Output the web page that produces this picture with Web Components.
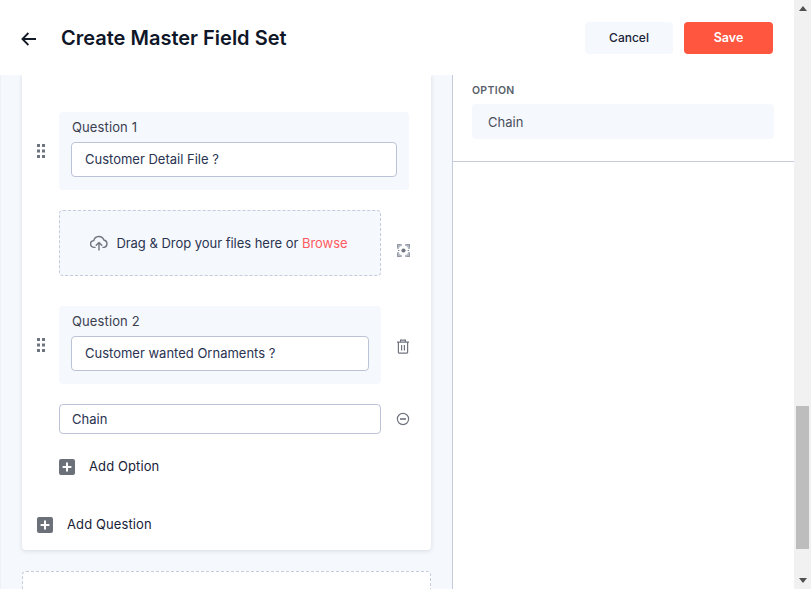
<!DOCTYPE html>
<html><head><meta charset="utf-8">
<style>
html,body{margin:0;padding:0;height:589px;overflow:hidden;background:#fff;font-family:Inter,"Liberation Sans",sans-serif}
</style></head><body>
<app-shell>
  <page-header slot="header">Create Master Field Set</page-header>
  <form-card slot="main">
    <question-row handle>
      <question-box label="Question 1" value="Customer Detail File ?" wide></question-box>
    </question-row>
    <drop-row></drop-row>
    <question-row handle icon="trash">
      <question-box label="Question 2" value="Customer wanted Ornaments ?"></question-box>
    </question-row>
    <option-row value="Chain"></option-row>
    <add-action class="opt">Add Option</add-action>
    <add-action class="q">Add Question</add-action>
  </form-card>
  <dashed-card slot="main"></dashed-card>
  <side-panel slot="side" label="OPTION" value="Chain"></side-panel>
</app-shell>
<script>
function def(name, html, init){
  customElements.define(name, class extends HTMLElement{
    constructor(){super();this.attachShadow({mode:'open'});}
    connectedCallback(){this.shadowRoot.innerHTML=typeof html==='function'?html(this):html;}
  });
}
const A=(e,n)=>e.getAttribute(n)||'';
const DOTS=`<svg width="8" height="14" viewBox="0 0 8 14" fill="#6e7480"><rect x="0" y="0" width="3" height="3"/><rect x="5" y="0" width="3" height="3"/><rect x="0" y="5.5" width="3" height="3"/><rect x="5" y="5.5" width="3" height="3"/><rect x="0" y="11" width="3" height="3"/><rect x="5" y="11" width="3" height="3"/></svg>`;
const TRASH=`<svg width="14" height="15" viewBox="0 0 14 15" fill="none" stroke="#70757f" stroke-width="1.2"><path d="M1 3.2H13M4.6 3V1.2H9.4V3M2.4 3.4V13.2a1 1 0 0 0 1 1H10.6a1 1 0 0 0 1-1V3.4M5.6 6V11.5M8.4 6V11.5"/></svg>`;
const MINUS=`<svg width="14" height="14" viewBox="0 0 14 14" fill="none" stroke="#70757f" stroke-width="1.2"><circle cx="7" cy="7" r="5.6"/><path stroke-width="1.6" d="M4 7H10"/></svg>`;
const FOCUS=`<svg width="13" height="13" viewBox="0 0 13 13"><rect width="13" height="13" fill="#b4b9c4"/><rect x="2" y="2" width="9" height="9" rx="3" fill="#fff"/><path d="M0 5H2V8H0ZM11 5H13V8H11ZM5 0H8V2H5ZM5 11H8V13H5Z" fill="#fff"/><path d="M1 6H2.4V7H1ZM10.6 6H12V7H10.6Z" fill="#7f8490"/><path d="M.5 3.5V.5H3.5M9.5 .5H12.5V3.5M12.5 9.5V12.5H9.5M3.5 12.5H.5V9.5" fill="none" stroke="#8f94a0" stroke-width="1"/><circle cx="6.5" cy="6.5" r="2.1" fill="#70757f"/></svg>`;
const UPLOAD=`<svg width="18" height="16" viewBox="0 0 18 16" fill="none" stroke="#70757f" stroke-width="1.4" stroke-linecap="round" stroke-linejoin="round"><path d="M5 12.4H4.2A3.4 3.4 0 0 1 3.8 5.6 5.2 5.2 0 0 1 13.8 5a3.8 3.8 0 0 1 .4 7.4H13"/><path d="M9 15V7.6M6.2 10.2 9 7.4l2.8 2.8"/></svg>`;

def('app-shell',`<style>
:host{display:flex;height:589px;width:811px;overflow:hidden}
.page{width:794px;display:flex;flex-direction:column;height:589px;flex:none}
.body{display:flex;flex:1;min-height:0}
.main{width:452px;background:#f5f8fc;flex:none;padding:0 21px 0 22px;box-sizing:border-box;overflow:hidden;display:flex;flex-direction:column;gap:21px;box-shadow:inset 1px 0 0 #eef1f6}
.side{flex:1;border-left:1px solid #c5cbdc;min-width:0}
</style>
<div class="page"><slot name="header"></slot>
<div class="body"><div class="main"><slot name="main"></slot></div><div class="side"><slot name="side"></slot></div></div></div>
<fake-scrollbar></fake-scrollbar>`);

def('page-header',`<style>
:host{display:flex;align-items:center;height:75px;flex:none;background:#fff;padding:0 21px 0 21px;box-sizing:border-box;position:relative}
svg{flex:none;margin-right:25px;margin-top:2px}
h1{flex:1;margin:0;font:600 20px Inter,sans-serif;color:#0f1628}
.acts{display:flex;gap:11px}
</style>
<svg width="15" height="14" viewBox="0 0 15 14" fill="none" stroke="#141a26" stroke-width="1.8"><path d="M15 7H1.6M7.4 1 1.4 7l6 6"/></svg>
<h1><slot></slot></h1>
<div class="acts"><ui-button>Cancel</ui-button><ui-button primary>Save</ui-button></div>`);

def('ui-button',e=>`<style>
:host{display:flex;align-items:center;justify-content:center;width:${e.hasAttribute('primary')?89:88}px;height:32px;border-radius:4px;
background:${e.hasAttribute('primary')?'#ff5640':'#f5f8fc'};color:${e.hasAttribute('primary')?'#fff':'#1a2238'};
font:${e.hasAttribute('primary')?600:500} ${e.hasAttribute('primary')?12.5:12}px Inter,sans-serif}
</style><slot></slot>`);

def('form-card',`<style>
:host{display:flex;flex-direction:column;flex:none;width:409px;height:475px;box-sizing:border-box;background:#fff;padding:37px 0 0 15px;border-radius:0 0 4px 4px;box-shadow:0 1px 4px rgba(60,70,100,.16)}
</style><slot></slot>`);

def('dashed-card',`<style>
:host{display:block;flex:none;width:409px;height:60px;box-sizing:border-box;background:#fff;border:1px dashed #c5cbdc;border-radius:4px}
</style>`);

def('question-row',e=>`<style>
:host{display:flex;align-items:center;flex:none}
.h{width:8px;flex:none;margin-right:14px;display:flex}
.i{margin-left:15px;display:flex;flex:none;margin-top:2px}
</style><div class="h">${DOTS}</div><slot></slot>${A(e,'icon')==='trash'?`<div class="i">${TRASH}</div>`:''}`);

def('question-box',e=>`<style>
:host{display:flex;flex:none;flex-direction:column;box-sizing:border-box;width:${e.hasAttribute('wide')?350:322}px;height:78px;background:#f5f8fc;border-radius:4px;padding:0 12px}
.l{height:30px;font:400 13px/31px Inter,sans-serif;letter-spacing:.12px;padding-left:1px;color:#3b4050}
</style><div class="l">${A(e,'label')}</div><text-field value="${A(e,'value')}"></text-field>`);

def('text-field',e=>`<style>
:host{display:flex;align-items:center;box-sizing:border-box;height:35px;background:#fff;border:1px solid #bcc3d6;border-radius:4px;padding:0 13px 1px;font:400 13px Inter,sans-serif;color:#2a3350}
</style>${A(e,'value')}`);

def('drop-row',`<style>
:host{display:flex;flex:none;margin:20px 0 30px 22px;height:66px}
.z{flex:none;box-sizing:border-box;width:322px;height:66px;background:#f5f8fc;border:1px dashed #c5cbdc;border-radius:4px;display:flex;align-items:center;justify-content:center;gap:8px;font:400 13px Inter,sans-serif;letter-spacing:-.03px;color:#2a3350;padding-right:2px}
.z svg{margin-top:-1px}
b{font-weight:400;color:#ff5a5f}
.i{margin:34px 0 0 16px;height:13px;display:flex;flex:none}
</style><div class="z">${UPLOAD}<span>Drag &amp; Drop your files here or <b>Browse</b></span></div><div class="i">${FOCUS}</div>`);

def('option-row',e=>`<style>
:host{display:flex;align-items:center;flex:none;margin:20px 0 0 22px}
.f{flex:none;box-sizing:border-box;width:322px;height:30px;display:flex;align-items:center;background:#fff;border:1px solid #bcc3d6;border-radius:4px;padding:0 12px;font:400 13px Inter,sans-serif;color:#2a3350}
.i{margin-left:15px;display:flex;flex:none}
</style><div class="f">${A(e,'value')}</div><div class="i">${MINUS}</div>`);

def('add-action',e=>{
  const q=e.classList.contains('q');
  return `<style>
:host{display:flex;align-items:center;gap:14px;flex:none;height:16px;margin:${q?'42px 0 0 0':'25px 0 0 22px'};font:400 13px Inter,sans-serif;letter-spacing:.1px;color:#1a2238}
span{margin-top:-2px}
</style><svg width="16" height="16" viewBox="0 0 16 16"><rect width="16" height="16" rx="2" fill="#6b7079"/><path d="M8 3.6V12.4M3.6 8H12.4" stroke="#fff" stroke-width="2"/></svg><span><slot></slot></span>`;
});

def('side-panel',e=>`<style>
:host{display:block;height:87px;box-sizing:border-box;padding:9px 20px 0 19px;border-bottom:1px solid #c5cbdc}
.l{font:600 10.5px/14px Inter,sans-serif;letter-spacing:.3px;color:#5a5f6a;height:20px}
.v{height:35px;background:#f5f8fc;border-radius:4px;display:flex;align-items:center;padding:0 16px;font:400 13px Inter,sans-serif;color:#4a4f5c}
</style><div class="l">${A(e,'label')}</div><div class="v">${A(e,'value')}</div>`);

def('fake-scrollbar',`<style>
:host{display:flex;flex-direction:column;width:17px;height:589px;flex:none;background:#f1f1f1}
.b{height:17px;flex:none;display:flex;align-items:center;justify-content:center}
.s1{height:389px;flex:none}.s2{flex:1}
.t{height:143px;flex:none;margin:0 2px;background:#bdbdbd}
</style>
<div class="b"><svg width="8" height="5" viewBox="0 0 8 5"><path d="M4 0 8 5H0Z" fill="#505050"/></svg></div>
<div class="s1"></div><div class="t"></div><div class="s2"></div>
<div class="b"><svg width="8" height="5" viewBox="0 0 8 5"><path d="M0 0H8L4 5Z" fill="#505050"/></svg></div>`);
</script>
</body></html>
